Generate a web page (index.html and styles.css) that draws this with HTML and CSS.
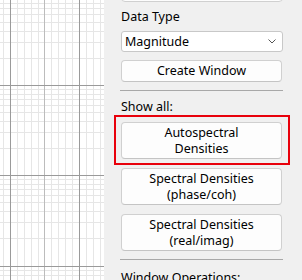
FILE: index.html
```html
<!DOCTYPE html>
<html>
<head>
<meta charset="utf-8">
<link rel="stylesheet" href="styles.css">
</head>
<body>
<div class="app">
  <div class="plot">
    <svg width="104" height="280" viewBox="0 0 104 280">
      <g class="minor">
        <line x1="3.5" y1="0" x2="3.5" y2="280"/>
        <line x1="17.5" y1="0" x2="17.5" y2="280"/>
        <line x1="24.5" y1="0" x2="24.5" y2="280"/>
        <line x1="31.5" y1="0" x2="31.5" y2="280"/>
        <line x1="38.5" y1="0" x2="38.5" y2="280"/>
        <line x1="51.5" y1="0" x2="51.5" y2="280"/>
        <line x1="58.5" y1="0" x2="58.5" y2="280"/>
        <line x1="65.5" y1="0" x2="65.5" y2="280"/>
        <line x1="72.5" y1="0" x2="72.5" y2="280"/>
        <line x1="86.5" y1="0" x2="86.5" y2="280"/>
        <line x1="93.5" y1="0" x2="93.5" y2="280"/>
        <line x1="100.5" y1="0" x2="100.5" y2="280"/>
        <line x1="0" y1="3.5" x2="104" y2="3.5"/>
        <line x1="0" y1="8.5" x2="104" y2="8.5"/>
        <line x1="0" y1="14.5" x2="104" y2="14.5"/>
        <line x1="0" y1="22.5" x2="104" y2="22.5"/>
        <line x1="0" y1="31.5" x2="104" y2="31.5"/>
        <line x1="0" y1="42.5" x2="104" y2="42.5"/>
        <line x1="0" y1="58.5" x2="104" y2="58.5"/>
        <line x1="0" y1="89.5" x2="104" y2="89.5"/>
        <line x1="0" y1="94.5" x2="104" y2="94.5"/>
        <line x1="0" y1="99.5" x2="104" y2="99.5"/>
        <line x1="0" y1="105.5" x2="104" y2="105.5"/>
        <line x1="0" y1="112.5" x2="104" y2="112.5"/>
        <line x1="0" y1="121.5" x2="104" y2="121.5"/>
        <line x1="0" y1="132.5" x2="104" y2="132.5"/>
        <line x1="0" y1="148.5" x2="104" y2="148.5"/>
        <line x1="0" y1="179.5" x2="104" y2="179.5"/>
        <line x1="0" y1="184.5" x2="104" y2="184.5"/>
        <line x1="0" y1="189.5" x2="104" y2="189.5"/>
        <line x1="0" y1="195.5" x2="104" y2="195.5"/>
        <line x1="0" y1="202.5" x2="104" y2="202.5"/>
        <line x1="0" y1="211.5" x2="104" y2="211.5"/>
        <line x1="0" y1="222.5" x2="104" y2="222.5"/>
        <line x1="0" y1="238.5" x2="104" y2="238.5"/>
        <line x1="0" y1="270.5" x2="104" y2="270.5"/>
        <line x1="0" y1="275.5" x2="104" y2="275.5"/>
      </g>
      <g class="mid">
        <line x1="44.5" y1="0" x2="44.5" y2="280"/>
      </g>
      <g class="major">
        <line x1="10.5" y1="0" x2="10.5" y2="280"/>
        <line x1="79.5" y1="0" x2="79.5" y2="280"/>
        <line x1="0" y1="85.5" x2="104" y2="85.5"/>
        <line x1="0" y1="175.5" x2="104" y2="175.5"/>
        <line x1="0" y1="266.5" x2="104" y2="266.5"/>
      </g>
    </svg>
  </div>
  <div class="panel">
    <div class="cutbox"></div>
    <div class="label label-first">Data Type</div>
    <div class="select">
      <span>Magnitude</span>
      <svg class="chev" width="8" height="5" viewBox="0 0 8 5"><path d="M0.5 0.5 L4 4 L7.5 0.5" fill="none" stroke="#555" stroke-width="1"/></svg>
    </div>
    <div class="btn btn-single">Create Window</div>
    <div class="sep"></div>
    <div class="label">Show all:</div>
    <div class="btn btn-double highlight">Autospectral<br>Densities</div>
    <div class="btn btn-double">Spectral Densities<br>(phase/coh)</div>
    <div class="btn btn-double">Spectral Densities<br>(real/imag)</div>
    <div class="sep sep-second"></div>
    <div class="label label-last">Window Operations:</div>
  </div>
</div>
</body>
</html>
```

FILE: styles.css
```css
html, body {
  margin: 0;
  padding: 0;
  width: 302px;
  height: 280px;
  overflow: hidden;
  background: #f0f0f0;
}
.app {
  display: flex;
  height: 280px;
  font-family: "Noto Sans", "Open Sans", sans-serif;
  font-size: 12.5px;
  color: #000;
}
.plot {
  width: 104px;
  height: 280px;
  background: #fff;
  flex: none;
}
.plot svg {
  display: block;
}
.minor line {
  stroke: #e6e6e6;
  stroke-width: 1;
}
.mid line {
  stroke: #bcbcbc;
  stroke-width: 1;
}
.major line {
  stroke: #9a9a9a;
  stroke-width: 1;
}
.panel {
  flex: 1;
  display: flex;
  flex-direction: column;
  padding: 0 19px 0 16px;
}
.panel > * {
  flex: none;
}
.cutbox {
  height: 20px;
  margin-top: -20px;
  margin-left: 1px;
  border: 1px solid #d0d0d0;
  border-radius: 4px;
  background: #fdfdfd;
}
.label {
  line-height: 16px;
  height: 16px;
  margin-left: 1px;
  margin-top: 8px;
  white-space: nowrap;
}
.label-first {
  margin-top: 7px;
}
.select {
  margin-top: 6px;
  margin-left: 1px;
  height: 19px;
  border: 1px solid #c8c8c8;
  border-radius: 3px;
  background: #fff;
  display: flex;
  align-items: center;
  justify-content: space-between;
  padding: 0 6px 0 3px;
  line-height: 16px;
}
.chev {
  display: block;
}
.btn {
  margin: 8px 1px 0 1px;
  border: 1px solid #d0d0d0;
  border-bottom-color: #c4c4c4;
  border-radius: 4px;
  background: #fdfdfd;
  text-align: center;
  line-height: 16px;
}
.btn-single {
  height: 20px;
  line-height: 20px;
}
.btn-double {
  height: 35px;
  display: flex;
  flex-direction: column;
  justify-content: center;
  margin-top: 9px;
}
.highlight {
  margin-top: 7px;
  position: relative;
}
.highlight::after {
  content: "";
  position: absolute;
  top: -8px;
  left: -8px;
  right: -9px;
  bottom: -7px;
  border: 2px solid #e8000b;
  pointer-events: none;
}
.sep {
  height: 1px;
  background: #a8a8a8;
  margin-top: 8px;
}
.label-last {
  margin-top: 10px;
}
```
